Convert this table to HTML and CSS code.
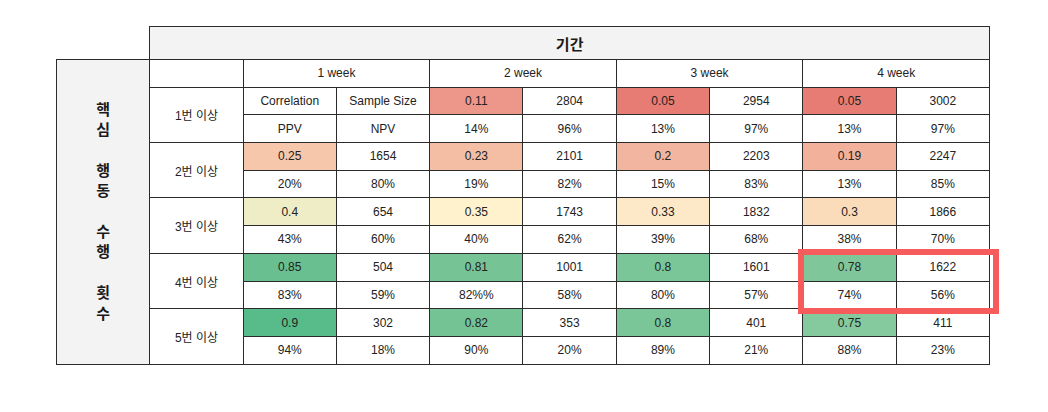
FILE: index.html
```html
<!DOCTYPE html>
<html lang="ko">
<head>
<meta charset="utf-8">
<link rel="stylesheet" href="styles.css">
</head>
<body>
<div class="wrap">
<table class="grid">
<colgroup>
<col class="c"><col class="c"><col class="c"><col class="c"><col class="c"><col class="c"><col class="c"><col class="c"><col class="c"><col class="c">
</colgroup>
<tr class="hrow">
<td class="blank"></td>
<td class="title" colspan="9">기간</td>
</tr>
<tr>
<td class="side" rowspan="11">핵<br>심<br><br>행<br>동<br><br>수<br>행<br><br>횟<br>수</td>
<td></td>
<td colspan="2">1 week</td>
<td colspan="2">2 week</td>
<td colspan="2">3 week</td>
<td colspan="2">4 week</td>
</tr>
<tr>
<td rowspan="2">1번 이상</td>
<td>Correlation</td><td>Sample Size</td>
<td class="r11">0.11</td><td>2804</td>
<td class="r05">0.05</td><td>2954</td>
<td class="r05">0.05</td><td>3002</td>
</tr>
<tr>
<td>PPV</td><td>NPV</td>
<td>14%</td><td>96%</td>
<td>13%</td><td>97%</td>
<td>13%</td><td>97%</td>
</tr>
<tr>
<td rowspan="2">2번 이상</td>
<td class="r25">0.25</td><td>1654</td>
<td class="r23">0.23</td><td>2101</td>
<td class="r20">0.2</td><td>2203</td>
<td class="r19">0.19</td><td>2247</td>
</tr>
<tr>
<td>20%</td><td>80%</td>
<td>19%</td><td>82%</td>
<td>15%</td><td>83%</td>
<td>13%</td><td>85%</td>
</tr>
<tr>
<td rowspan="2">3번 이상</td>
<td class="r40">0.4</td><td>654</td>
<td class="r35">0.35</td><td>1743</td>
<td class="r33">0.33</td><td>1832</td>
<td class="r30">0.3</td><td>1866</td>
</tr>
<tr>
<td>43%</td><td>60%</td>
<td>40%</td><td>62%</td>
<td>39%</td><td>68%</td>
<td>38%</td><td>70%</td>
</tr>
<tr>
<td rowspan="2">4번 이상</td>
<td class="g85">0.85</td><td>504</td>
<td class="g81">0.81</td><td>1001</td>
<td class="g80">0.8</td><td>1601</td>
<td class="g78">0.78</td><td>1622</td>
</tr>
<tr>
<td>83%</td><td>59%</td>
<td>82%%</td><td>58%</td>
<td>80%</td><td>57%</td>
<td>74%</td><td>56%</td>
</tr>
<tr>
<td rowspan="2">5번 이상</td>
<td class="g90">0.9</td><td>302</td>
<td class="g82">0.82</td><td>353</td>
<td class="g80">0.8</td><td>401</td>
<td class="g75">0.75</td><td>411</td>
</tr>
<tr>
<td>94%</td><td>18%</td>
<td>90%</td><td>20%</td>
<td>89%</td><td>21%</td>
<td>88%</td><td>23%</td>
</tr>
</table>
<div class="highlight"></div>
</div>
</body>
</html>
```

FILE: styles.css
```css
html, body {
  margin: 0;
  padding: 0;
  background: #ffffff;
}

.wrap {
  position: relative;
  padding: 26px 0 0 56px;
  font-family: "Liberation Sans", "Noto Sans CJK KR", sans-serif;
  color: #222222;
}

.grid {
  border-collapse: collapse;
  table-layout: fixed;
  width: 933px;
  font-size: 12px;
}

.grid .c {
  width: 93.3px;
}

.grid td {
  border: 1px solid #2b2b2b;
  height: 26.7px;
  padding: 0;
  text-align: center;
  vertical-align: middle;
  white-space: nowrap;
}

.grid .hrow td {
  height: 32px;
}

.grid td.blank {
  border: none;
}

.grid td.title {
  background: #f3f3f3;
  font-size: 15px;
  font-weight: bold;
  color: #1a1a1a;
}

.grid td.side {
  background: #f3f3f3;
  font-size: 15px;
  font-weight: bold;
  line-height: 20.4px;
  color: #1a1a1a;
}

.r05 { background: #e67c73; }
.r11 { background: #ec978a; }
.r19 { background: #f1b19a; }
.r20 { background: #f2b59f; }
.r23 { background: #f4bea5; }
.r25 { background: #f6c7ab; }
.r30 { background: #fbdcba; }
.r33 { background: #fde8c7; }
.r35 { background: #fff2cc; }
.r40 { background: #efedc6; }
.g75 { background: #85c99e; }
.g78 { background: #7fc79b; }
.g80 { background: #7ac698; }
.g81 { background: #76c496; }
.g82 { background: #73c394; }
.g85 { background: #69bf8f; }
.g90 { background: #57bb8a; }

.highlight {
  position: absolute;
  left: 798px;
  top: 249px;
  width: 189px;
  height: 53px;
  border: 6px solid #f65c5c;
}
```
